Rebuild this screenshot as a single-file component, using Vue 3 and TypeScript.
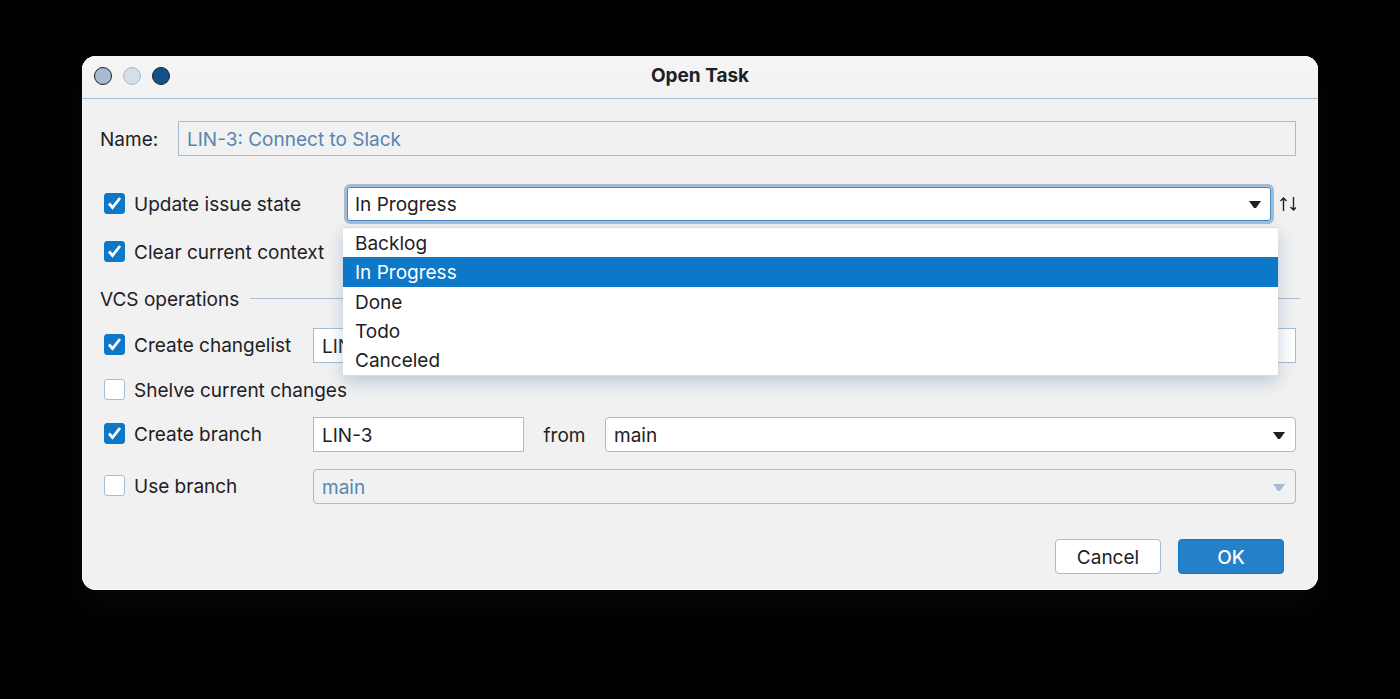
<script setup lang="ts">
import { ref } from 'vue'

const states: string[] = ['Backlog', 'In Progress', 'Done', 'Todo', 'Canceled']
const branches: string[] = ['main']

const name = ref('LIN-3: Connect to Slack')
const issueState = ref('In Progress')
const menuOpen = ref(true)
const updateState = ref(true)
const clearContext = ref(true)
const createChangelist = ref(true)
const changelist = ref('LIN-3: Connect to Slack')
const shelveChanges = ref(false)
const createBranch = ref(true)
const branchName = ref('LIN-3')
const fromBranch = ref('main')
const useBranch = ref(false)
const existingBranch = ref('main')

function choose(state: string): void {
  issueState.value = state
  menuOpen.value = false
}
</script>

<template>
  <main class="desktop">
    <section class="window" role="dialog" aria-labelledby="dialog-title">
      <header class="titlebar">
        <div class="lights">
          <button class="light close" type="button" aria-label="Close"></button>
          <button class="light minimize" type="button" aria-label="Minimize"></button>
          <button class="light zoom" type="button" aria-label="Zoom"></button>
        </div>
        <h1 id="dialog-title" class="title">Open Task</h1>
      </header>

      <form class="content" @submit.prevent>
        <div class="row name-row">
          <label class="name-label" for="task-name">Name:</label>
          <input id="task-name" v-model="name" class="field" type="text" disabled />
        </div>

        <div class="row state-row">
          <label class="check wide">
            <input v-model="updateState" type="checkbox" />
            <span>Update issue state</span>
          </label>
          <div class="combo focused">
            <select v-model="issueState" class="field" aria-label="Issue state" @mousedown.prevent="menuOpen = !menuOpen">
              <option v-for="state in states" :key="state">{{ state }}</option>
            </select>
            <svg class="arrow" viewBox="0 0 12 8" aria-hidden="true"><path d="M0 0H12L7 7H5Z" /></svg>
            <ul v-if="menuOpen" class="menu" role="listbox" aria-label="Issue states">
              <li
                v-for="state in states"
                :key="state"
                class="item"
                :class="{ selected: state === issueState }"
                role="option"
                :aria-selected="state === issueState"
                @click="choose(state)"
              >{{ state }}</li>
            </ul>
          </div>
          <button class="sort" type="button" aria-label="Update states">
            <svg viewBox="0 0 17 16" aria-hidden="true">
              <path d="M4.5 15V2M1.5 5L4.5 2L7.5 5M14.5 1V14M11.5 11L14.5 14L17 11.5" />
            </svg>
          </button>
        </div>

        <div class="row clear-row">
          <label class="check">
            <input v-model="clearContext" type="checkbox" />
            <span>Clear current context</span>
          </label>
        </div>

        <h2 class="separator">VCS operations</h2>

        <div class="row changelist-row">
          <label class="check">
            <input v-model="createChangelist" type="checkbox" />
            <span>Create changelist</span>
          </label>
          <input v-model="changelist" class="field" type="text" aria-label="Changelist name" />
        </div>

        <div class="row shelve-row">
          <label class="check">
            <input v-model="shelveChanges" type="checkbox" />
            <span>Shelve current changes</span>
          </label>
        </div>

        <div class="row branch-row">
          <label class="check">
            <input v-model="createBranch" type="checkbox" />
            <span>Create branch</span>
          </label>
          <input v-model="branchName" class="field branch-name" type="text" aria-label="Branch name" />
          <label class="from" for="from-branch">from</label>
          <div class="combo">
            <select id="from-branch" v-model="fromBranch" class="field">
              <option v-for="branch in branches" :key="branch">{{ branch }}</option>
            </select>
            <svg class="arrow" viewBox="0 0 12 8" aria-hidden="true"><path d="M0 0H12L7 7H5Z" /></svg>
          </div>
        </div>

        <div class="row use-row">
          <label class="check">
            <input v-model="useBranch" type="checkbox" />
            <span>Use branch</span>
          </label>
          <div class="combo disabled">
            <select v-model="existingBranch" class="field" aria-label="Existing branch" disabled>
              <option v-for="branch in branches" :key="branch">{{ branch }}</option>
            </select>
            <svg class="arrow" viewBox="0 0 12 8" aria-hidden="true"><path d="M0 0H12L7 7H5Z" /></svg>
          </div>
        </div>

        <footer class="actions">
          <button class="btn" type="button">Cancel</button>
          <button class="btn primary" type="submit">OK</button>
        </footer>
      </form>
    </section>
  </main>
</template>

<style>
body {
  margin: 0;
  background: #000;
}
</style>

<style scoped>
* {
  box-sizing: border-box;
}

.desktop {
  min-height: 100vh;
  padding: 56px 82px;
  background: #000;
  color: #1d2125;
  font-family: Inter, "Liberation Sans", sans-serif;
  font-size: 19px;
  line-height: 22px;
}

.window {
  border-radius: 14px;
  background: #f1f1f1;
  box-shadow: inset 0 0 0 1px #fafafa, 0 18px 36px rgba(255, 255, 255, 0.03);
}

.titlebar {
  display: grid;
  grid-template-columns: 1fr auto 1fr;
  align-items: center;
  height: 43px;
  padding: 0 12px 2px;
  border-bottom: 1px solid #a9bdd4;
  background: linear-gradient(#f5f5f5, #f2f2f2);
  border-radius: 14px 14px 0 0;
}

.lights {
  display: flex;
  gap: 11px;
}

.light {
  width: 18px;
  height: 18px;
  padding: 0;
  border: 1px solid #1d2125;
  border-radius: 50%;
}

.close {
  background: #a7bbd3;
}

.minimize {
  border-color: #a7bbd3;
  background: #d6dee7;
}

.zoom {
  background: #12518a;
}

.title {
  margin: 0;
  font-size: 19px;
  font-weight: 700;
  line-height: 22px;
}

.content {
  display: flex;
  flex-direction: column;
  padding: 22px 18px 16px;
}

.row {
  display: flex;
  align-items: center;
  padding: 0 4px;
}

.name-row {
  padding-left: 0;
}

.name-label {
  width: 78px;
  padding-top: 2px;
}

.state-row {
  margin-top: 28px;
}

.clear-row {
  margin-top: 17px;
}

.separator {
  display: flex;
  align-items: center;
  gap: 11px;
  margin: 25px 0 0;
  font-size: 19px;
  font-weight: 400;
}

.separator::after {
  content: "";
  flex: 1;
  height: 1px;
  margin-bottom: 3px;
  background: #a9bdd4;
}

.changelist-row {
  margin-top: 17px;
}

.shelve-row {
  margin-top: 16px;
}

.branch-row {
  margin-top: 15px;
}

.use-row {
  margin-top: 17px;
}

.check {
  display: flex;
  flex: none;
  align-items: flex-start;
  gap: 9px;
  width: 209px;
  white-space: nowrap;
}

.check span {
  padding-top: 1px;
}

.check.wide {
  width: 240px;
}

.check input {
  flex: none;
  width: 21px;
  height: 21px;
  margin: 0;
  border: 1px solid #a7bbd3;
  border-radius: 3px;
  background: #fff;
  appearance: none;
}

.check input:checked {
  border-color: #0e78c8;
  background: #0e78c8 url("data:image/svg+xml,%3Csvg xmlns='http://www.w3.org/2000/svg' viewBox='0 0 19 19'%3E%3Cpath d='M4 9.5L7.5 13.5L15 4' fill='none' stroke='white' stroke-width='2.8'/%3E%3C/svg%3E") center / 19px 19px no-repeat;
}

.field {
  flex: 1;
  width: 100%;
  min-width: 0;
  height: 35px;
  padding: 2px 8px 0;
  border: 1px solid #a7bbd3;
  border-radius: 0;
  background: #fff;
  color: inherit;
  font: inherit;
  opacity: 1;
  outline: none;
  appearance: none;
}

.field:disabled {
  border-color: #a7bbd3;
  background: #f1f1f1;
  color: #5685b2;
}

.branch-name {
  flex: none;
  width: 211px;
}

.from {
  width: 81px;
  padding-top: 2px;
  text-align: center;
}

.combo {
  position: relative;
  display: flex;
  flex: 1;
}

.combo .field {
  border-radius: 4px;
}

.combo.focused .field {
  height: 40px;
  border: 3px solid #a7bbd3;
  border-radius: 6px;
  box-shadow: inset 0 0 0 1px #3d8ac9;
}

.arrow {
  position: absolute;
  top: 50%;
  right: 11px;
  width: 12px;
  height: 8px;
  margin-top: -3px;
  fill: #1d2125;
  pointer-events: none;
}

.focused .arrow {
  right: 13px;
}

.disabled .arrow {
  fill: #a7bbd3;
}

.sort {
  flex: none;
  width: 17px;
  height: 16px;
  margin-left: 5px;
  padding: 0;
  border: 0;
  background: none;
}

.sort svg {
  display: block;
  overflow: visible;
  fill: none;
  stroke: #1d2125;
  stroke-width: 1.4;
}

.menu {
  position: absolute;
  z-index: 2;
  top: 43px;
  right: -4px;
  left: -1px;
  display: flex;
  flex-direction: column;
  height: 149px;
  margin: 0;
  padding: 0;
  border: solid #d3dde8;
  border-width: 1px 0;
  background: #fff;
  box-shadow: 0 6px 16px rgba(110, 140, 175, 0.4);
  list-style: none;
}

.item {
  display: flex;
  flex: 1;
  align-items: center;
  padding: 2px 12px 0;
}

.item.selected {
  background: #0e78c8;
  color: #fff;
}

.actions {
  display: flex;
  justify-content: flex-end;
  gap: 17px;
  margin-top: 35px;
  padding-right: 16px;
}

.btn {
  width: 106px;
  height: 35px;
  padding: 2px 0 0;
  border: 1px solid #a7bbd3;
  border-radius: 4px;
  background: #fff;
  color: inherit;
  font: inherit;
}

.btn.primary {
  border-color: #0e78c8;
  background: #2481c9;
  color: #fff;
  font-weight: 500;
}
</style>
